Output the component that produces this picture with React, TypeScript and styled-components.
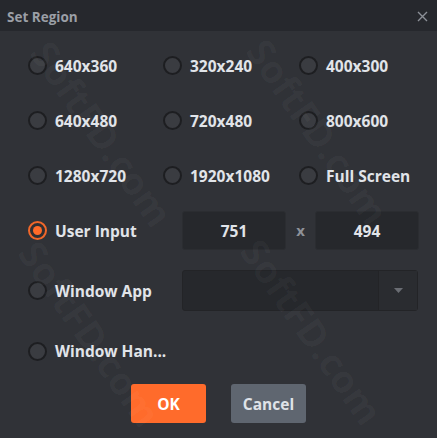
import React from 'react';
import styled, { createGlobalStyle } from 'styled-components';

const GlobalStyle = createGlobalStyle`
  html, body {
    margin: 0;
    padding: 0;
    background: #303237;
  }
  * {
    box-sizing: border-box;
  }
`;

const Dialog = styled.div`
  width: 437px;
  height: 438px;
  background: #303237;
  font-family: 'Open Sans', 'Noto Sans', sans-serif;
  position: relative;
  overflow: hidden;
`;

const TitleBar = styled.div`
  height: 31px;
  background: #26282d;
  display: flex;
  align-items: center;
  justify-content: space-between;
  padding: 2px 8px 0 7px;
`;

const Title = styled.div`
  color: #9b9fa6;
  font-size: 13.5px;
  font-weight: 700;
`;

const CloseButton = styled.div`
  width: 14px;
  height: 14px;
  display: flex;
  align-items: center;
  justify-content: center;
`;

const Body = styled.div`
  padding: 7px 0 0 28px;
  display: flex;
  flex-direction: column;
`;

const PresetGrid = styled.div`
  display: grid;
  grid-template-columns: 135px 136px 110px;
  grid-auto-rows: 55px;
`;

const Option = styled.label<{ $width?: number }>`
  display: flex;
  align-items: center;
  gap: 8px;
  color: #e1e4e9;
  font-size: 15.5px;
  font-weight: 700;
  white-space: nowrap;
  ${(p) => (p.$width ? `width: ${p.$width}px;` : '')}
`;

const Radio = styled.span<{ $checked?: boolean }>`
  width: 19px;
  height: 19px;
  border-radius: 50%;
  flex-shrink: 0;
  background: ${(p) => (p.$checked ? '#2e2f33' : '#3a3c41')};
  border: 2px solid ${(p) => (p.$checked ? '#f0672a' : '#1d1e21')};
  display: flex;
  align-items: center;
  justify-content: center;

  &::after {
    content: '';
    width: 9px;
    height: 9px;
    border-radius: 50%;
    background: #ff6a28;
    display: ${(p) => (p.$checked ? 'block' : 'none')};
  }
`;

const Row = styled.div<{ $height: number }>`
  display: flex;
  align-items: center;
  height: ${(p) => p.$height}px;
`;

const SizeInput = styled.div`
  width: 104px;
  height: 39px;
  background: #26282c;
  border: 1px solid #2b2d31;
  border-radius: 3px;
  display: flex;
  align-items: center;
  justify-content: center;
  color: #e1e4e9;
  font-size: 15.5px;
  font-weight: 700;
`;

const Times = styled.div`
  width: 29px;
  text-align: center;
  color: #8e9197;
  font-size: 15px;
  font-weight: 700;
  padding-bottom: 2px;
`;

const Select = styled.div`
  width: 236px;
  height: 41px;
  background: #26282c;
  border: 1px solid #232427;
  border-radius: 3px;
  display: flex;
`;

const SelectValue = styled.div`
  flex: 1;
`;

const SelectArrow = styled.div`
  width: 39px;
  border-left: 1px solid #232427;
  background: #2a2c30;
  display: flex;
  align-items: center;
  justify-content: center;
`;

const Buttons = styled.div`
  display: flex;
  justify-content: center;
  gap: 25px;
  padding: 5px 28px 0 0;
`;

const Button = styled.button<{ $primary?: boolean }>`
  width: 75px;
  height: 39px;
  border: none;
  border-radius: 3px;
  background: ${(p) => (p.$primary ? '#ff6b2b' : '#5f6670')};
  color: ${(p) => (p.$primary ? '#ffffff' : '#dfe3e8')};
  font-family: 'Open Sans', 'Noto Sans', sans-serif;
  font-size: 15.5px;
  font-weight: 700;
  padding: 0;
`;

const Watermark = styled.div<{ $x: number; $y: number }>`
  position: absolute;
  left: ${(p) => p.$x}px;
  top: ${(p) => p.$y}px;
  transform: rotate(55deg);
  transform-origin: left top;
  font-family: 'Open Sans', sans-serif;
  font-size: 38px;
  font-weight: 700;
  color: rgba(255, 255, 255, 0.035);
  pointer-events: none;
  white-space: nowrap;
`;

const presets = [
  '640x360',
  '320x240',
  '400x300',
  '640x480',
  '720x480',
  '800x600',
  '1280x720',
  '1920x1080',
  'Full Screen',
];

const App: React.FC = () => {
  return (
    <Dialog>
      <GlobalStyle />
      <TitleBar>
        <Title>Set Region</Title>
        <CloseButton>
          <svg width="11" height="11" viewBox="0 0 11 11">
            <path d="M1 1L10 10M10 1L1 10" stroke="#8c9097" strokeWidth="1.4" />
          </svg>
        </CloseButton>
      </TitleBar>
      <Body>
        <PresetGrid>
          {presets.map((p) => (
            <Option key={p}>
              <Radio />
              {p}
            </Option>
          ))}
        </PresetGrid>
        <Row $height={55}>
          <Option $width={154}>
            <Radio $checked />
            User Input
          </Option>
          <SizeInput>751</SizeInput>
          <Times>x</Times>
          <SizeInput>494</SizeInput>
        </Row>
        <Row $height={65}>
          <Option $width={154}>
            <Radio />
            Window App
          </Option>
          <Select>
            <SelectValue />
            <SelectArrow>
              <svg width="9" height="5" viewBox="0 0 9 5">
                <path d="M0 0H9L4.5 5Z" fill="#6a6d73" />
              </svg>
            </SelectArrow>
          </Select>
        </Row>
        <Row $height={56}>
          <Option>
            <Radio />
            Window Han...
          </Option>
        </Row>
        <Buttons>
          <Button $primary>OK</Button>
          <Button>Cancel</Button>
        </Buttons>
      </Body>
      <Watermark $x={62} $y={30}>SoftFD.com</Watermark>
      <Watermark $x={278} $y={28}>SoftFD.com</Watermark>
      <Watermark $x={50} $y={230}>SoftFD.com</Watermark>
      <Watermark $x={272} $y={228}>SoftFD.com</Watermark>
    </Dialog>
  );
};

export default App;
